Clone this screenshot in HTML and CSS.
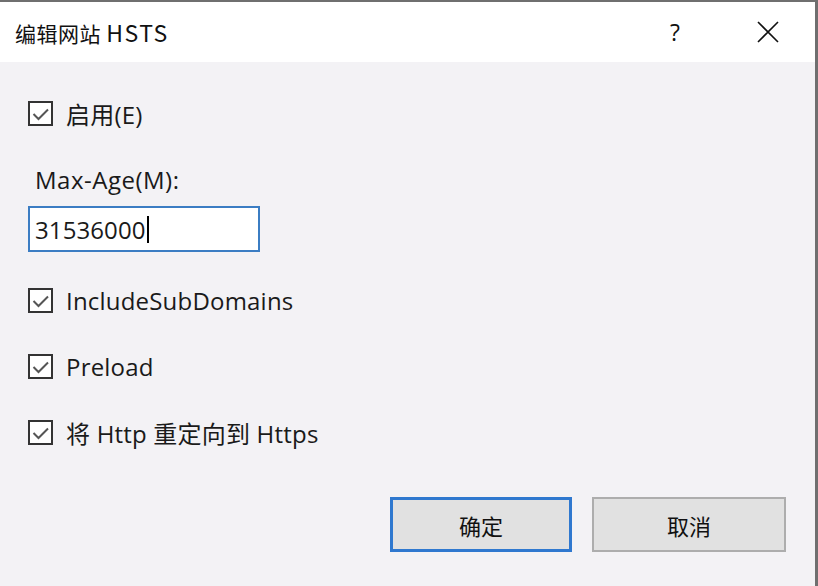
FILE: index.html
```html
<!DOCTYPE html>
<html lang="zh-CN">
<head>
<meta charset="utf-8">
<title>编辑网站 HSTS</title>
<link rel="stylesheet" href="styles.css">
</head>
<body>
<div class="window">
  <div class="titlebar">
    <span class="title">编辑网站 <span class="latin">HSTS</span></span>
    <span class="help">?</span>
    <span class="close">
      <svg width="22" height="22" viewBox="0 0 22 22"><path d="M1 1 L21 21 M21 1 L1 21" stroke="#111" stroke-width="1.6" fill="none"/></svg>
    </span>
  </div>
  <div class="content">
    <label class="check row-enable">
      <svg class="box" width="25" height="25" viewBox="0 0 25 25"><rect x="1" y="1" width="23" height="23" fill="#fff" stroke="#333" stroke-width="2"/><polyline points="5.5,13 10.5,18 20,8.5" fill="none" stroke="#555" stroke-width="2"/></svg>
      <span>启用(E)</span>
    </label>
    <div class="field">
      <div class="field-label">Max-Age(M):</div>
      <div class="input"><span>31536000</span><span class="caret"></span></div>
    </div>
    <label class="check row-sub">
      <svg class="box" width="25" height="25" viewBox="0 0 25 25"><rect x="1" y="1" width="23" height="23" fill="#fff" stroke="#333" stroke-width="2"/><polyline points="5.5,13 10.5,18 20,8.5" fill="none" stroke="#555" stroke-width="2"/></svg>
      <span>IncludeSubDomains</span>
    </label>
    <label class="check row-pre">
      <svg class="box" width="25" height="25" viewBox="0 0 25 25"><rect x="1" y="1" width="23" height="23" fill="#fff" stroke="#333" stroke-width="2"/><polyline points="5.5,13 10.5,18 20,8.5" fill="none" stroke="#555" stroke-width="2"/></svg>
      <span>Preload</span>
    </label>
    <label class="check row-redir">
      <svg class="box" width="25" height="25" viewBox="0 0 25 25"><rect x="1" y="1" width="23" height="23" fill="#fff" stroke="#333" stroke-width="2"/><polyline points="5.5,13 10.5,18 20,8.5" fill="none" stroke="#555" stroke-width="2"/></svg>
      <span>将 Http 重定向到 Https</span>
    </label>
    <div class="buttons">
      <div class="btn btn-ok">确定</div>
      <div class="btn btn-cancel">取消</div>
    </div>
  </div>
</div>
</body>
</html>
```
FILE: styles.css
```css
html, body {
  margin: 0;
  padding: 0;
  width: 818px;
  height: 586px;
  overflow: hidden;
}
body {
  font-family: "Open Sans", "Noto Sans CJK SC", sans-serif;
  color: #1a1a1a;
}
.window {
  box-sizing: border-box;
  width: 818px;
  height: 586px;
  border-top: 2px solid #6f6f6f;
  border-right: 3px solid #6f6f6f;
  background: #f3f2f5;
  display: flex;
  flex-direction: column;
}
.titlebar {
  height: 60px;
  background: #fff;
  display: flex;
  align-items: center;
  flex-shrink: 0;
}
.title {
  font-family: "Noto Sans CJK SC", sans-serif;
  font-size: 21px;
  letter-spacing: 0.5px;
  margin-left: 15px;
  flex: 1;
  color: #111;
}
.title .latin {
  font-size: 23px;
  letter-spacing: 1.5px;
}
.help {
  font-size: 23px;
  width: 20px;
  margin-right: 67px;
  color: #111;
}
.close {
  width: 22px;
  height: 22px;
  margin-right: 36px;
  display: flex;
}
.content {
  flex: 1;
  padding-left: 28px;
  display: flex;
  flex-direction: column;
}
.check {
  display: flex;
  align-items: center;
  height: 25px;
  font-size: 24px;
  letter-spacing: 0.2px;
}
.check .box {
  flex-shrink: 0;
  margin-right: 13px;
}
.row-enable { margin-top: 39px; }
.field { margin-top: 39px; }
.field-label {
  font-size: 24px;
  letter-spacing: 0.5px;
  margin-left: 7px;
  line-height: 30px;
}
.input {
  margin-top: 11px;
  box-sizing: border-box;
  width: 232px;
  height: 46px;
  background: #fff;
  border: 2px solid #3b7dc3;
  display: flex;
  align-items: center;
  padding-left: 5px;
  font-size: 24px;
  letter-spacing: 0.1px;
}
.caret {
  width: 2px;
  height: 27px;
  background: #000;
  margin-left: 1px;
}
.row-sub { margin-top: 36px; }
.row-pre { margin-top: 41px; }
.row-redir { margin-top: 41px; }
.buttons {
  display: flex;
  margin-top: 52px;
  margin-left: 362px;
  gap: 20px;
}
.btn {
  box-sizing: border-box;
  height: 55px;
  background: #e1e1e1;
  display: flex;
  align-items: center;
  justify-content: center;
  font-family: "Noto Sans CJK SC", sans-serif;
  font-size: 22px;
  color: #111;
}
.btn-ok {
  width: 182px;
  border: 3px solid #2f78cf;
}
.btn-cancel {
  width: 194px;
  border: 2px solid #adadad;
}
```
